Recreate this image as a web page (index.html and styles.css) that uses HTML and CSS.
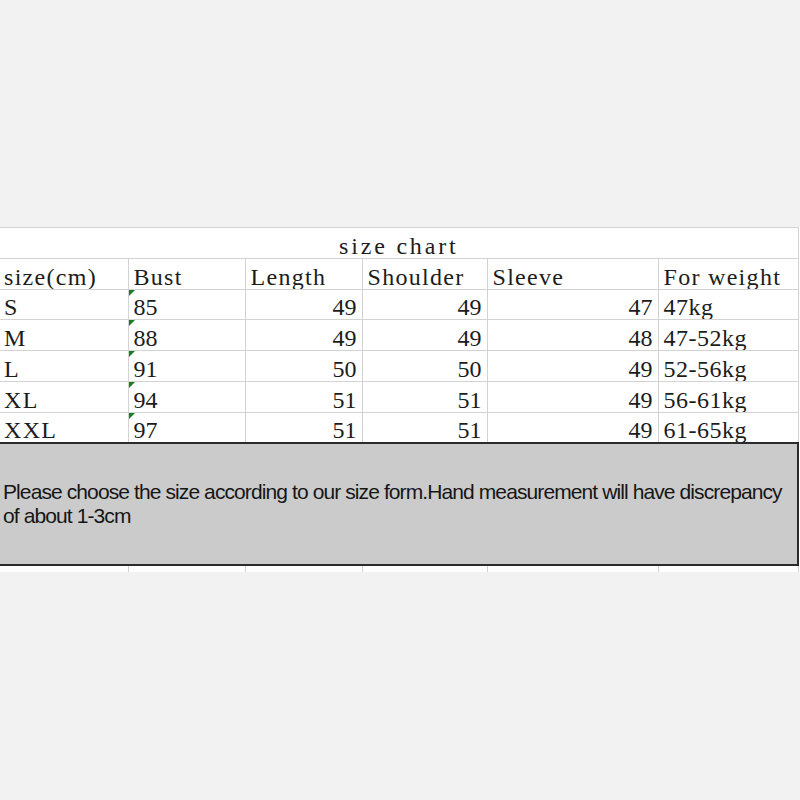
FILE: index.html
```html
<!DOCTYPE html>
<html>
<head>
<meta charset="utf-8">
<link rel="stylesheet" href="styles.css">
</head>
<body>
<div class="sheet">
  <table class="chart">
    <colgroup>
      <col class="c1"><col class="c2"><col class="c3"><col class="c4"><col class="c5"><col class="c6">
    </colgroup>
    <tr class="r31">
      <td colspan="6" class="title">size chart</td>
    </tr>
    <tr class="r31">
      <td>size(cm)</td><td>Bust</td><td>Length</td><td>Shoulder</td><td>Sleeve</td><td>For weight</td>
    </tr>
    <tr class="r30">
      <td>S</td><td class="txtnum">85</td><td class="num">49</td><td class="num">49</td><td class="num">47</td><td class="kg">47kg</td>
    </tr>
    <tr class="r31">
      <td>M</td><td class="txtnum">88</td><td class="num">49</td><td class="num">49</td><td class="num">48</td><td class="kg">47-52kg</td>
    </tr>
    <tr class="r31">
      <td>L</td><td class="txtnum">91</td><td class="num">50</td><td class="num">50</td><td class="num">49</td><td class="kg">52-56kg</td>
    </tr>
    <tr class="r31">
      <td>XL</td><td class="txtnum">94</td><td class="num">51</td><td class="num">51</td><td class="num">49</td><td class="kg">56-61kg</td>
    </tr>
    <tr class="r30">
      <td>XXL</td><td class="txtnum">97</td><td class="num">51</td><td class="num">51</td><td class="num">49</td><td class="kg">61-65kg</td>
    </tr>
    <tr class="note-row">
      <td colspan="6" class="note">Please choose the size according to our size form.Hand measurement will have discrepancy of about 1-3cm</td>
    </tr>
    <tr class="tail">
      <td></td><td></td><td></td><td></td><td></td><td></td>
    </tr>
  </table>
</div>
</body>
</html>
```

FILE: styles.css
```css
html, body {
  margin: 0;
  padding: 0;
}
body {
  background: #f3f2f2;
  width: 800px;
  height: 800px;
}
.sheet {
  margin-top: 227px;
  background: #ffffff;
  width: 800px;
}
.chart {
  border-collapse: collapse;
  table-layout: fixed;
  width: 798px;
  font-family: "Liberation Serif", "Times New Roman", serif;
  font-size: 24px;
  letter-spacing: 1.3px;
  color: #1c1c1c;
}
.c1 { width: 128px; }
.c2 { width: 117px; }
.c3 { width: 117px; }
.c4 { width: 125px; }
.c5 { width: 171px; }
.c6 { width: 140px; }

.chart td {
  border: 1px solid #d3d3d3;
  padding: 0 4px 0 5px;
  vertical-align: bottom;
  line-height: 24px;
  white-space: nowrap;
  overflow: hidden;
  box-sizing: border-box;
}
.chart td:first-child {
  border-left: none;
  padding-left: 4px;
}
.r31 { height: 31px; }
.r30 { height: 30px; }

.chart td.title {
  text-align: center;
  letter-spacing: 2.8px;
}
.chart td.num {
  text-align: right;
  padding-right: 5px;
  letter-spacing: 0;
}
.chart td.kg {
  letter-spacing: 0.5px;
}
.chart td.txtnum {
  position: relative;
  letter-spacing: 0;
}
.txtnum::before {
  content: "";
  position: absolute;
  left: 0;
  top: 0;
  width: 0;
  height: 0;
  border-top: 6px solid #1d7a24;
  border-right: 6px solid transparent;
}
.note-row { height: 122px; }
.chart td.note {
  background: #cbcbcb;
  border-top: 2px solid #2b2b2b;
  border-right: 2px solid #2b2b2b;
  border-bottom: 2px solid #2b2b2b;
  font-family: "Liberation Sans", Arial, sans-serif;
  font-size: 21px;
  letter-spacing: -0.9px;
  line-height: 24px;
  color: #161616;
  white-space: normal;
  vertical-align: middle;
  padding: 0 6px 0 3px;
}
.tail { height: 7px; }
.chart .tail td {
  border-top: none;
  border-bottom: none;
  padding: 0;
  line-height: 0;
}
```
